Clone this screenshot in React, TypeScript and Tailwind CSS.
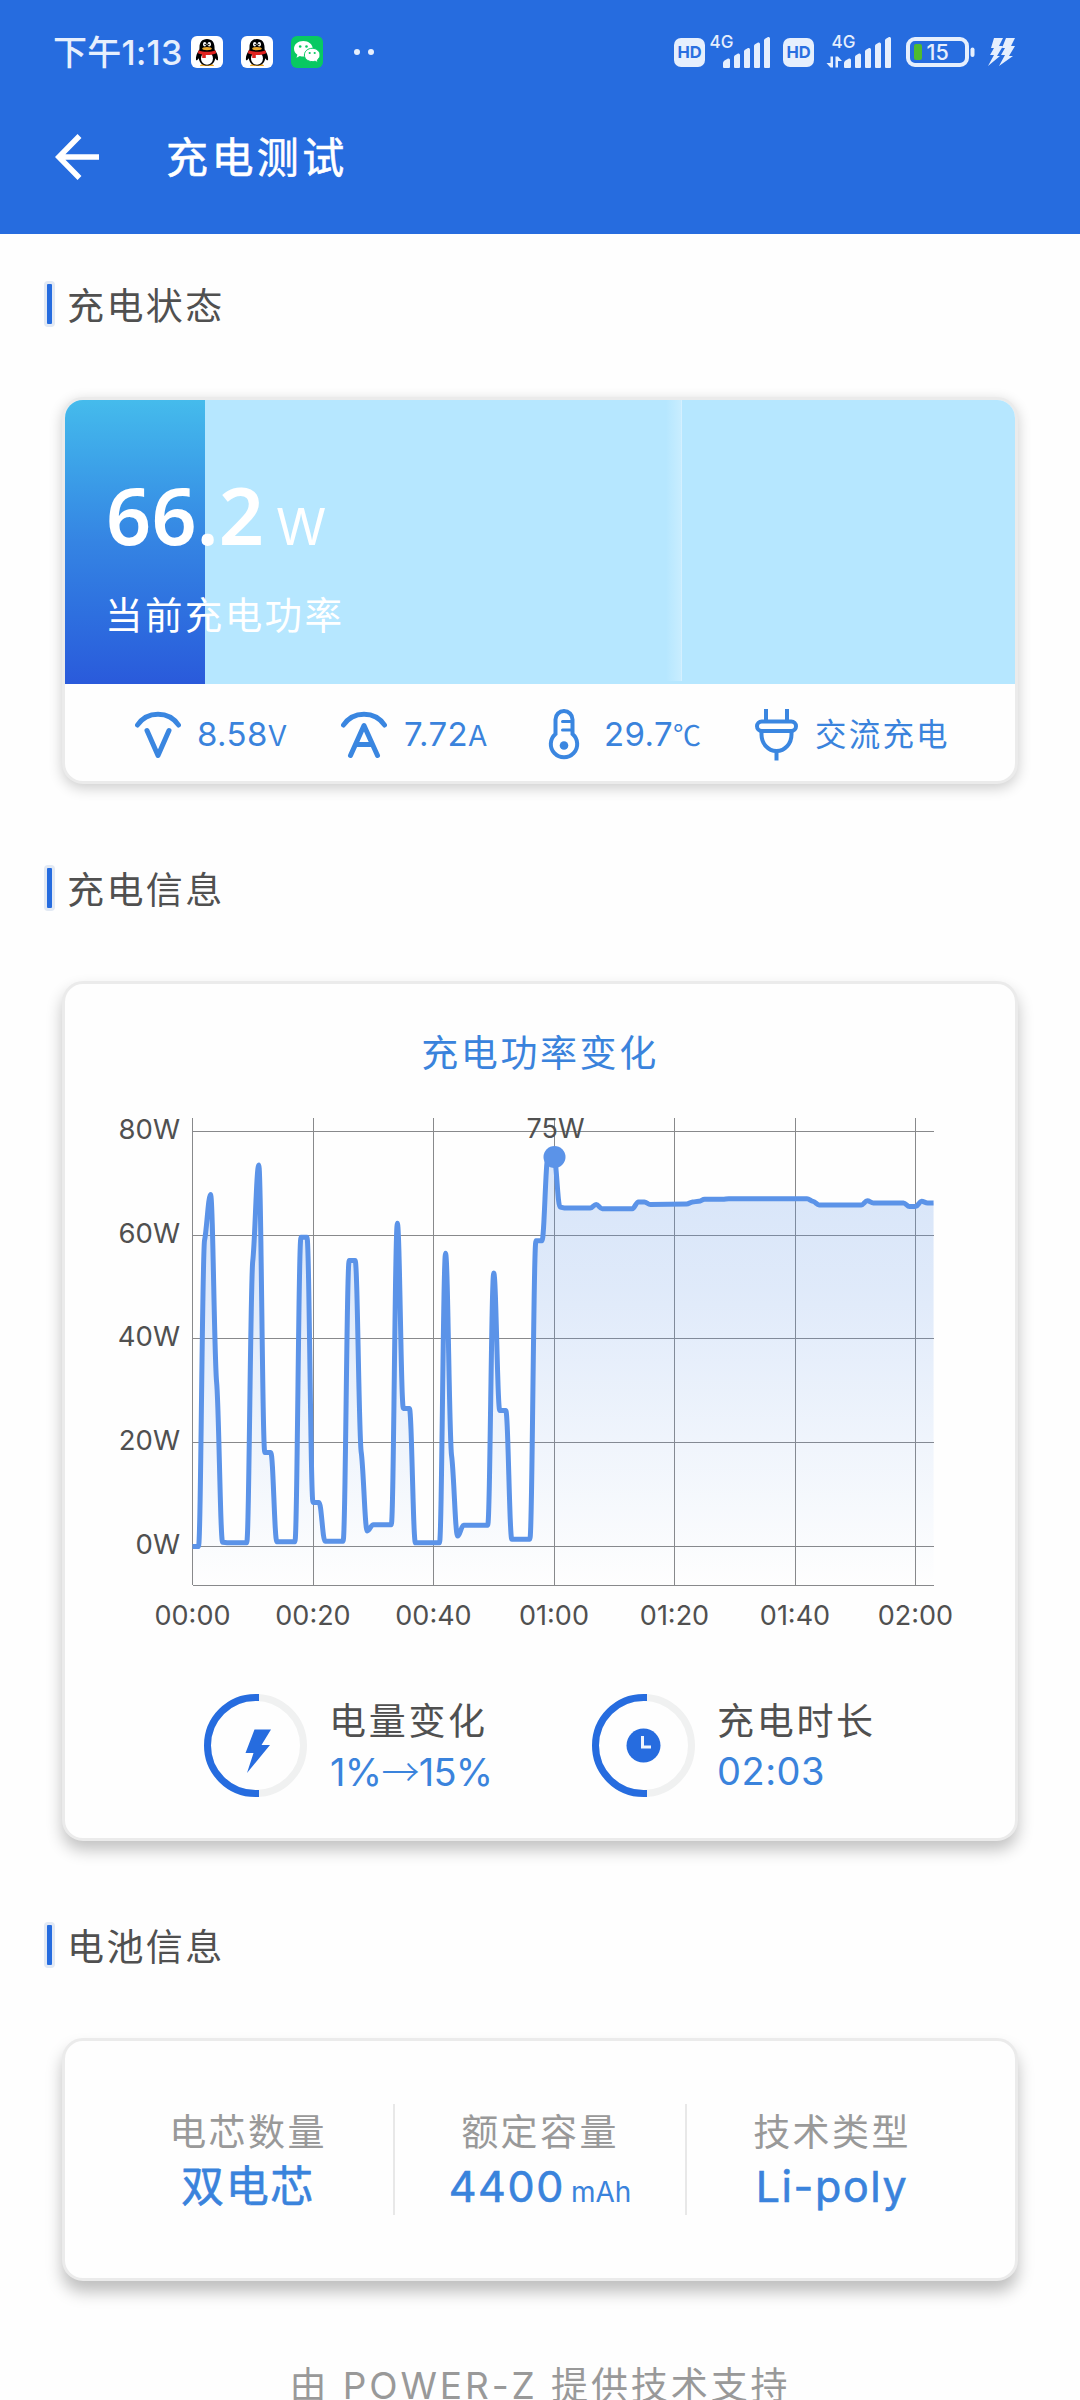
import * as React from "react";

const POWER_BY_SECOND: [number, number][] = [
  [0, 0], [1, 0], [2, 59], [3, 67.8], [4, 31.7], [5, 0.8], [6, 0.7], [9, 0.7],
  [10, 55], [11, 73.5], [12, 18.1], [13, 18.1], [14, 0.9], [17, 0.9],
  [18, 59.6], [19, 59.6], [20, 8.5], [21, 8.5], [22, 1], [25, 1],
  [26, 55.1], [27, 55.1], [28, 18.2], [29, 3], [30, 4.2], [33, 4.2],
  [34, 62.3], [35, 26.6], [36, 26.6], [37, 0.7], [41, 0.7],
  [42, 56.5], [43, 17.5], [44, 2], [45, 4.1], [49, 4.1],
  [50, 52.7], [51, 26.2], [52, 26.2], [53, 1.4], [56, 1.4],
  [57, 58.9], [58, 58.9], [59, 75], [60, 75], [61, 65.4], [62, 65.2], [66, 65.2],
  [67, 65.9], [68, 65.1], [73, 65.1], [74, 66.4], [75, 66.4], [76, 65.9], [82, 66],
  [83, 66.4], [84, 66.5], [85, 66.9], [88, 66.9], [89, 67], [102, 67], [103, 66.5],
  [104, 65.8], [111, 65.8], [112, 66.6], [113, 66.2], [118, 66.2], [119, 65.5],
  [120, 65.5], [121, 66.5], [122, 66.2], [123, 66.2],
];

const X_TICKS = ["00:00", "00:20", "00:40", "01:00", "01:20", "01:40", "02:00"];
const Y_TICKS = [80, 60, 40, 20, 0];

const toX = (s: number) => 127.5 + s * 6.025;
const toY = (w: number) => 446.5 - w * 5.19;

// cubic path that never overshoots: flat tangents at peaks and plateaus
const buildLine = (data: [number, number][]) => {
  const pts = data.map(([s, w]) => [toX(s), toY(w)]);
  const slopes = pts.slice(1).map((p, i) => (p[1] - pts[i][1]) / (p[0] - pts[i][0]));
  const tangents = pts.map((_, i) => {
    const a = slopes[i - 1];
    const b = slopes[i];
    if (a === undefined || b === undefined || a * b <= 0) return 0;
    return (0.7 * a * b) / (a + b);
  });
  return pts.reduce((d, p, i) => {
    if (i === 0) return `M${p[0]} ${p[1]}`;
    const q = pts[i - 1];
    const h = Math.min((p[0] - q[0]) / 2.6, 2.4);
    return `${d}C${q[0] + h} ${q[1] + h * tangents[i - 1]} ${p[0] - h} ${p[1] - h * tangents[i]} ${p[0]} ${p[1]}`;
  }, "");
};

const QQIcon: React.FC = () => (
  <svg width="32" height="32" viewBox="0 0 32 32" className="shrink-0">
    <rect width="32" height="32" rx="6" fill="#fff" />
    <path d="M9 30c0-2 3-2 6-1.500h2c3-.5 6-.5 6 1.500z" fill="#eda82a" />
    <path d="M16 3c-5 0-7.500 3.600-7.500 8 0 1 0 2-.3 3C6 17 4.500 20.500 5 24c.6.8 1.800-.3 2.700-1.800C8.600 27 11.500 29.500 16 29.500s7.400-2.500 8.300-7.300c.9 1.500 2.100 2.600 2.700 1.800.5-3.500-1-7-3.200-10-.3-1-.3-2-.3-3 0-4.400-2.500-8-7.500-8z" fill="#000" />
    <ellipse cx="16" cy="22.500" rx="6" ry="6.200" fill="#fff" />
    <ellipse cx="13.700" cy="8.300" rx="1.700" ry="2.300" fill="#fff" />
    <ellipse cx="18.300" cy="8.300" rx="1.700" ry="2.300" fill="#fff" />
    <circle cx="14.200" cy="8.600" r=".8" />
    <circle cx="17.800" cy="8.600" r=".8" />
    <ellipse cx="16" cy="12.600" rx="4.800" ry="1.700" fill="#eda82a" />
    <path d="M7.500 14.300c5 2 12 2 17 0l.6 3c-2.500 1.400-6.500 1.900-10.300 1.700V22h-3.600v-3.600c-1.600-.2-3-.6-4.200-1.200z" fill="#e0231f" />
  </svg>
);

const WechatIcon: React.FC = () => (
  <svg width="32" height="32" viewBox="0 0 32 32" className="shrink-0">
    <rect width="32" height="32" rx="6" fill="#08c962" />
    <path d="M12.300 5C7 5 3 8.400 3 12.700c0 2.500 1.300 4.500 3.400 6l-.9 3 3.300-1.700c1.300.4 2.300.5 3.500.5 5.200 0 9.400-3.400 9.400-7.800S17.500 5 12.300 5z" fill="#fff" />
    <path d="M21.200 12.300c4.400 0 7.800 3 7.800 6.700 0 2-1 3.700-2.700 5l.7 2.700-2.900-1.500c-1 .3-1.900.4-2.900.4-4.400 0-7.800-2.900-7.800-6.600s3.400-6.700 7.800-6.700z" fill="#fff" stroke="#08c962" strokeWidth="1" />
    <circle cx="9.200" cy="10.500" r="1.300" fill="#08c962" />
    <circle cx="15.500" cy="10.500" r="1.300" fill="#08c962" />
    <circle cx="18.700" cy="17" r="1.100" fill="#08c962" />
    <circle cx="23.700" cy="17" r="1.100" fill="#08c962" />
  </svg>
);

const HdBadge: React.FC = () => (
  <span className="flex h-[29px] w-[31px] shrink-0 items-center justify-center rounded-[7px] bg-[#e6effd] text-[16.5px] font-bold leading-none text-[#2a6fe0]">
    HD
  </span>
);

const Signal: React.FC<{ busy?: boolean }> = ({ busy }) => (
  <svg
    width={busy ? 66 : 61}
    height="44"
    viewBox={busy ? "-5 -5 66 44" : "0 -5 61 44"}
    fill="#e6effd"
    className="shrink-0 overflow-visible"
  >
    <text x={busy ? 0.5 : -0.5} y="13" fontSize="17" fontWeight="500">4G</text>
    <path d="M13 32v-4q0-1.500 1.500-2.500l3.500-2q2-.5 2 1.500v7q0 1-1 1h-5q-1 0-1-1zM24 32v-10q0-1 1-1.800l3-1.700q2-.5 2 1.500v12q0 1-1 1h-4q-1 0-1-1zM34 32V16.500q0-1 1-1.800l3-1.700q2-.5 2 1.500V32q0 1-1 1h-4q-1 0-1-1zM44 32V11q0-1 1-1.800l3-1.700q2-.5 2 1.500v23q0 1-1 1h-4q-1 0-1-1zM54 32V5.500q0-1 1-1.800l3-1.700q2-.5 2 1.500V32q0 1-1 1h-4q-1 0-1-1z" />
    {busy && <path d="M-.5 21.500h2.500v11H-.5l-4-4.500h4zM4.500 32.500v-11H7l4 4.500H7v6.500z" />}
  </svg>
);

const StatusBar: React.FC = () => (
  <div className="flex h-[104px] items-center pl-[53px] text-[#e6effd]">
    <span className="mt-px w-[138px] whitespace-nowrap text-[34px] font-medium leading-none tracking-[0.3px]">
      下午1:13
    </span>
    <div className="flex gap-[18px]">
      <QQIcon />
      <QQIcon />
      <WechatIcon />
    </div>
    <div className="ml-[31px] flex gap-2">
      <span className="h-1.5 w-1.5 rounded-full bg-[#e6effd]" />
      <span className="h-1.5 w-1.5 rounded-full bg-[#e6effd]" />
    </div>
    <div className="ml-[300px] flex items-center">
      <HdBadge />
      <div className="ml-[5px]"><Signal /></div>
      <div className="ml-3"><HdBadge /></div>
      <div className="ml-3"><Signal busy /></div>
      <svg width="70" height="30" viewBox="0 0 70 30" className="ml-[14px]">
        <rect x="2" y="2" width="59" height="26" rx="7" fill="none" stroke="#e6effd" strokeWidth="4" />
        <rect x="8" y="7" width="8" height="16" rx="2" fill="#4fbb2f" />
        <rect x="64.500" y="10.500" width="4" height="9.500" rx="2" fill="#e6effd" />
        <text x="20.500" y="23" fontSize="21.500" fontWeight="500" fill="#e6effd">15</text>
      </svg>
      <svg width="28" height="28" viewBox="0 0 28 28" fill="#e6effd" className="ml-[12px]">
        <path d="M6 0h9l-4 8h4L9 18h3L0 28l6-11H2l4-7H3z" />
        <path d="M18 0h9l-4 8h4l-6 10h4L11 28l6-11h-4l4-7h-3z" />
      </svg>
    </div>
  </div>
);

const SectionTitle: React.FC<{ children: React.ReactNode }> = ({ children }) => (
  <div className="flex h-[46px] items-center pl-[44px]">
    <span className="h-[46px] w-[11px] rounded-[4px] border-[3px] border-[#e2e9f4] bg-[#266cdf]" />
    <h2 className="ml-3 mt-1 text-[37px] leading-none tracking-[2.4px] text-[#505050]">{children}</h2>
  </div>
);

const VoltIcon: React.FC = () => (
  <svg width="46" height="52" viewBox="0 0 46 52" fill="none" stroke="#3a86e0" strokeWidth="5" strokeLinecap="round" strokeLinejoin="round">
    <path d="M2.500 16C12 1.500 34 1.500 43.500 16M12 21.500 23 46.500 34 21.500" />
  </svg>
);

const AmpIcon: React.FC = () => (
  <svg width="46" height="52" viewBox="0 0 46 52" fill="none" stroke="#3a86e0" strokeWidth="5" strokeLinecap="round" strokeLinejoin="round">
    <path d="M2.500 16C12 1.500 34 1.500 43.500 16M9.500 46.500 23 16.500 36.500 46.500M15.500 35.500h15" />
  </svg>
);

const ThermometerIcon: React.FC = () => (
  <svg width="32" height="52" viewBox="0 0 32 52" fill="none" stroke="#3a86e0" strokeWidth="4">
    <path d="M7.500 25V10.500a8.500 8.500 0 0 1 17 0V25a13.200 13.200 0 1 1-17 0z" />
    <path d="M14.500 12.500h9M14.500 21h9" strokeWidth="3" strokeLinecap="round" />
    <circle cx="16" cy="36.500" r="4.300" fill="#3a86e0" stroke="none" />
  </svg>
);

const PlugIcon: React.FC = () => (
  <svg width="43" height="52" viewBox="0 0 43 52" fill="none" stroke="#3a86e0" strokeWidth="4">
    <path d="M11 0v12M32 0v12M21.500 42v9.500" />
    <rect x="2" y="12.500" width="39" height="9.500" rx="4.750" />
    <path d="M6.500 22v3.500c0 9 6.500 16.500 15 16.500s15-7.500 15-16.500V22" />
  </svg>
);

interface MetricProps {
  value: string;
  children: React.ReactNode;
}

const Metric: React.FC<MetricProps> = ({ value, children }) => (
  <span className="whitespace-nowrap text-[33px] leading-none tracking-[0.4px] text-[#3a83dc]">
    {value}
    {children}
  </span>
);

const StatusCard: React.FC = () => (
  <section className="mx-[62px] mt-[70px] h-[387px] overflow-hidden rounded-[21px] border-[3px] border-[#ebebeb] bg-[#fefefe] shadow-[0_4px_14px_rgba(0,0,0,0.2)]">
    <div className="relative h-[284px] bg-[#b6e7ff]">
      <div className="absolute left-0 top-0 h-full w-[140px] bg-gradient-to-b from-[#45bbec] via-[#3584e3] to-[#2a5adb]" />
      <div className="absolute left-[601px] top-0 h-[281px] w-4 border-r border-[#d4f0ff] bg-gradient-to-r from-[#b6e7ff] to-[#c8edff]" />
      <div className="relative pl-[40px] pt-[76px] text-white">
        <div className="flex h-[78px] items-baseline leading-[78px]">
          <span className="w-[171px] pl-px font-['Noto_Sans',sans-serif] text-[79px] font-semibold tracking-[0.2px]">
            66.2
          </span>
          <span className="text-[51px]">W</span>
        </div>
        <p className="mt-[43px] text-[37.5px] leading-none tracking-[2.4px]">当前充电功率</p>
      </div>
    </div>
    <div className="flex h-[97px] items-center pl-[70px] pt-1">
      <VoltIcon />
      <div className="ml-4 w-[144px]">
        <Metric value="8.58"><span className="text-[28px]">V</span></Metric>
      </div>
      <AmpIcon />
      <div className="ml-[17px] w-[144px]">
        <Metric value="7.72"><span className="text-[28px]">A</span></Metric>
      </div>
      <ThermometerIcon />
      <div className="ml-[24px] w-[151px]">
        <Metric value="29.7"><span className="font-['Noto_Sans_CJK_SC'] text-[28px]">℃</span></Metric>
      </div>
      <PlugIcon />
      <span className="ml-[17px] mt-px text-[31.5px] leading-none tracking-[2.2px] text-[#3a83dc]">交流充电</span>
    </div>
  </section>
);

const PowerChart: React.FC = () => {
  const line = buildLine(POWER_BY_SECOND);
  return (
    <svg width="950" height="540" viewBox="0 0 950 540" className="block">
      <defs>
        <linearGradient id="power-fill" gradientUnits="userSpaceOnUse" x1="0" y1="57" x2="0" y2="485">
          <stop offset="0" stopColor="#5b93e8" stopOpacity="0.240" />
          <stop offset="0.300" stopColor="#5b93e8" stopOpacity="0.190" />
          <stop offset="0.700" stopColor="#5b93e8" stopOpacity="0.080" />
          <stop offset="1" stopColor="#5b93e8" stopOpacity="0" />
        </linearGradient>
      </defs>
      <g stroke="#88898b" strokeWidth="1" shapeRendering="crispEdges">
        {Y_TICKS.map((w) => (
          <path key={w} d={`M127.500 ${Math.floor(toY(w)) + 0.5}H869`} />
        ))}
        {X_TICKS.map((t, i) => (
          <path key={t} d={`M${Math.floor(toX(i * 20)) + 0.5} 18V485`} />
        ))}
        <path d="M127.500 485.500H869" />
      </g>
      <path d={`${line}V485H127.500Z`} fill="url(#power-fill)" />
      <path d={line} fill="none" stroke="#5b93e8" strokeWidth="5" strokeLinejoin="round" />
      <circle cx="489.500" cy="57" r="11" fill="#5b93e8" />
      <g fontSize="27" fill="#505050">
        <text x="490.500" y="38" textAnchor="middle">75W</text>
        {Y_TICKS.map((w) => (
          <text key={w} x="115" y={toY(w) + 7.500} textAnchor="end" fontSize="27.500">{w}W</text>
        ))}
        {X_TICKS.map((t, i) => (
          <text key={t} x={toX(i * 20)} y="524.500" textAnchor="middle">{t}</text>
        ))}
      </g>
    </svg>
  );
};

const Ring: React.FC<{ children: React.ReactNode }> = ({ children }) => (
  <svg width="103" height="103" viewBox="0 0 103 103" fill="none" className="shrink-0">
    <circle cx="51.500" cy="51.500" r="48" stroke="#f0f1f1" strokeWidth="7" />
    <path d="M55 3.500H51.500a48 48 0 0 0 0 96H55" stroke="#266cdf" strokeWidth="7" />
    {children}
  </svg>
);

const InfoCard: React.FC = () => (
  <section className="mx-[62px] mt-[70px] h-[860px] rounded-[21px] border-[3px] border-[#ebebeb] bg-[#fefefe] shadow-[0_9px_16px_rgba(0,0,0,0.24)]">
    <h3 className="h-[88px] pt-[51px] text-center text-[37px] leading-none tracking-[2.6px] text-[#3a83dc]">
      充电功率变化
    </h3>
    <div className="mt-7">
      <PowerChart />
    </div>
    <div className="mt-[54px] flex pl-[139px]">
      <Ring>
        <path d="M50.500 35.500H67L57.500 51h8.500L43 79l6.500-20H41.500z" fill="#266cdf" />
      </Ring>
      <div className="ml-[22px] w-[263px] whitespace-nowrap">
        <p className="mt-[9px] text-[37px] leading-[37px] tracking-[2.7px] text-[#505050]">电量变化</p>
        <p className="mt-[11px] pl-px text-[38px] leading-[38px] tracking-[-0.7px] text-[#3a83dc]">
          1%<span className="font-['Noto_Sans_CJK_SC'] font-light">→</span>15%
        </p>
      </div>
      <Ring>
        <circle cx="51.500" cy="51.500" r="17" fill="#266cdf" />
        <path d="M50.500 42v11h8.500" stroke="#eef4fd" strokeWidth="3" />
      </Ring>
      <div className="ml-[22px]">
        <p className="mt-[9px] text-[37px] leading-[37px] tracking-[2.7px] text-[#505050]">充电时长</p>
        <p className="mt-[12px] text-[38px] leading-[38px] tracking-[0.5px] text-[#3a83dc]">02:03</p>
      </div>
    </div>
  </section>
);

interface BatteryFieldProps {
  label: string;
  value: string;
  unit?: string;
}

const BatteryField: React.FC<BatteryFieldProps> = ({ label, value, unit }) => (
  <div className="flex flex-1 flex-col items-center pt-[10px]">
    <p className="text-[37px] leading-[37px] tracking-[2.4px] text-[#999]">{label}</p>
    <p className="mt-[14px] whitespace-nowrap text-[43px] leading-[42px] tracking-[1.6px] text-[#3a83dc] [-webkit-text-stroke:0.6px_#3a83dc]">
      {value}
      {unit && <span className="ml-[6px] text-[28px] tracking-normal [-webkit-text-stroke:0px]">{unit}</span>}
    </p>
  </div>
);

const BatteryCard: React.FC = () => (
  <section className="mx-[62px] mt-[70px] h-[243px] rounded-[21px] border-[3px] border-[#ebebeb] bg-[#fefefe] px-[38px] pt-[63px] shadow-[0_11px_16px_rgba(0,0,0,0.25)]">
    <div className="flex h-[111px] divide-x-2 divide-[#e8e8e8]">
      <BatteryField label="电芯数量" value="双电芯" />
      <BatteryField label="额定容量" value="4400" unit="mAh" />
      <BatteryField label="技术类型" value="Li-poly" />
    </div>
  </section>
);

const App: React.FC = () => (
  <div
    lang="zh-CN"
    className="h-[2400px] w-[1080px] overflow-hidden bg-[#fefefe] font-['Inter','Noto_Sans_CJK_SC',sans-serif]"
  >
    <header className="h-[234px] bg-[#266cdf]">
      <StatusBar />
      <div className="mt-[26px] flex h-[54px] items-center pl-[55px]">
        <svg width="45" height="46" viewBox="0 0 45 46" fill="none" stroke="#fff" strokeWidth="5.500">
          <path d="M44 23H4M24.500 2 3.800 23l20.700 21" />
        </svg>
        <h1 className="ml-[66px] mt-0.5 text-[42px] leading-none tracking-[3.4px] text-white [-webkit-text-stroke:0.6px_#fff]">
          充电测试
        </h1>
      </div>
    </header>
    <main className="pt-[47px]">
      <SectionTitle>充电状态</SectionTitle>
      <StatusCard />
      <div className="h-[81px]" />
      <SectionTitle>充电信息</SectionTitle>
      <InfoCard />
      <div className="h-[81px]" />
      <SectionTitle>电池信息</SectionTitle>
      <BatteryCard />
      <footer className="mt-[86px] whitespace-nowrap text-center text-[37px] leading-none tracking-[2.9px] text-[#999]">
        由 POWER-Z 提供技术支持
      </footer>
    </main>
  </div>
);

export default App;
